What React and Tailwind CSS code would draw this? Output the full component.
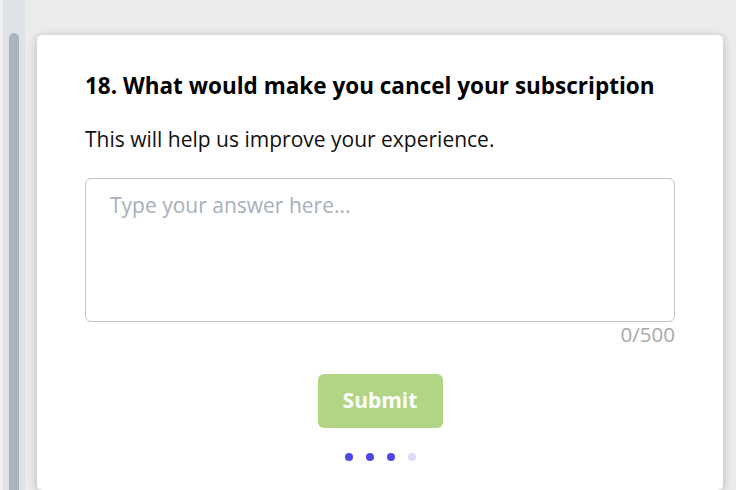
import { useState } from 'react';

export default function App() {
  const [text, setText] = useState('');

  return (
    <div
      className="flex h-[490px] w-[736px] overflow-hidden bg-[#ececec]"
      style={{ fontFamily: '"Open Sans", "Noto Sans", sans-serif' }}
    >
      {/* scrollbar strip */}
      <div className="flex h-full w-[25px] shrink-0 border-l-[3px] border-[#eef0f1] bg-[#dfe3e7] pt-[33px] pl-[6px]">
        <div className="h-full w-[10px] rounded-t-full bg-[#abb3bd]" />
      </div>

      <div className="ml-[12px] mt-[35px] flex w-[686px] shrink-0 flex-col rounded-[5px] bg-white px-[48px] pt-[36px] shadow-[0_2px_10px_rgba(0,0,0,0.25)]">
        <h2 className="text-[22.5px] leading-[30px] font-bold text-black">
          18. What would make you cancel your subscription
        </h2>
        <p className="mt-[24px] text-[21px] leading-[28px] text-[#111]">
          This will help us improve your experience.
        </p>

        <textarea
          value={text}
          onChange={(e) => setText(e.target.value.slice(0, 500))}
          placeholder="Type your answer here..."
          className="mt-[25px] h-[144px] w-full resize-none rounded-[6px] border border-[#c4c4c4] px-[24px] py-[12px] text-[21px] leading-[28px] text-[#222] outline-none placeholder:text-[#a7b0b9]"
        />
        <div className="text-right text-[20.5px] leading-[24px] text-[#a9a9a9]">
          {text.length}/500
        </div>

        <div className="mt-[28px] flex justify-center">
          <button
            type="button"
            className="h-[54px] w-[125px] rounded-[6px] bg-[#b2d585] text-[21px] font-bold text-white"
          >
            Submit
          </button>
        </div>

        <div className="mt-[25px] flex justify-center gap-[13px]">
          <span className="h-[8px] w-[8px] rounded-full bg-[#4f46e5]" />
          <span className="h-[8px] w-[8px] rounded-full bg-[#4f46e5]" />
          <span className="h-[8px] w-[8px] rounded-full bg-[#4f46e5]" />
          <span className="h-[8px] w-[8px] rounded-full bg-[#dcdafa]" />
        </div>
      </div>
    </div>
  );
}
